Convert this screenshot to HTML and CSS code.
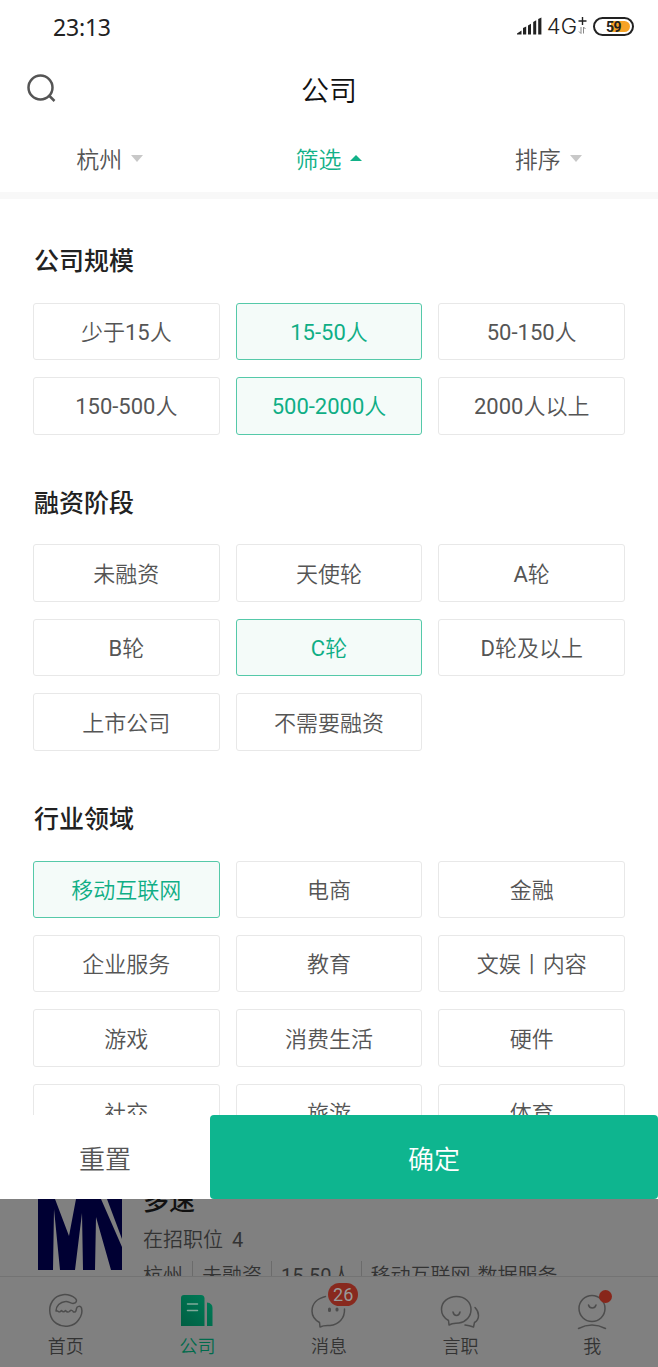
FILE: index.html
```html
<!DOCTYPE html>
<html lang="zh-CN">
<head>
<meta charset="UTF-8" />
<meta name="viewport" content="width=device-width, initial-scale=1" />
<title>公司</title>
<link rel="stylesheet" href="styles.css">
</head>
<body>
  <div class="app">
    <div class="status-bar">
      <span class="time">23:13</span>
      <div class="status-icons">
        <svg class="signal" width="25" height="18" viewBox="0 0 25 18">
          <path d="M0 17.5V16.5L4.5 13.5V17.5ZM6 17.5V11L9.2 9.5V17.5ZM11 17.5V8.5L14 6.8V17.5ZM16.2 17.5V5L19.2 3.3V17.5ZM21.2 17.5V2L24.4 0.5V17.5Z" fill="#222"/>
        </svg>
        <span class="network">4G</span>
        <svg class="data" width="9" height="18" viewBox="0 0 9 18">
          <path d="M4.5 0V8M0.5 4H8.5" stroke="#222" stroke-width="1.4" fill="none"/>
          <path d="M3 10V16.5L1 14.5M5.5 16.5V10L7.5 12" stroke="#888" stroke-width="1" fill="none"/>
        </svg>
        <div class="battery"><span>59</span></div>
      </div>
    </div>

    <header class="header">
      <svg class="search" width="32" height="32" viewBox="0 0 32 32">
        <circle cx="13.5" cy="13.5" r="12"/>
        <path d="M22 21.5L27.5 27" />
      </svg>
      <h1>公司</h1>
    </header>

    <nav class="filters">
      <div class="filter">杭州<i class="arrow"></i></div>
      <div class="filter active">筛选<i class="arrow up"></i></div>
      <div class="filter">排序<i class="arrow"></i></div>
    </nav>

    <main class="panel">
      <section>
        <h2>公司规模</h2>
        <div class="options">
          <button>少于15人</button>
          <button class="selected">15-50人</button>
          <button>50-150人</button>
          <button>150-500人</button>
          <button class="selected">500-2000人</button>
          <button>2000人以上</button>
        </div>
      </section>
      <section>
        <h2>融资阶段</h2>
        <div class="options">
          <button>未融资</button>
          <button>天使轮</button>
          <button>A轮</button>
          <button>B轮</button>
          <button class="selected">C轮</button>
          <button>D轮及以上</button>
          <button>上市公司</button>
          <button>不需要融资</button>
        </div>
      </section>
      <section>
        <h2>行业领域</h2>
        <div class="options">
          <button class="selected">移动互联网</button>
          <button>电商</button>
          <button>金融</button>
          <button>企业服务</button>
          <button>教育</button>
          <button>文娱丨内容</button>
          <button>游戏</button>
          <button>消费生活</button>
          <button>硬件</button>
          <button>社交</button>
          <button>旅游</button>
          <button>体育</button>
        </div>
      </section>
    </main>

    <div class="actions">
      <button class="reset">重置</button>
      <button class="confirm">确定</button>
    </div>

    <div class="company">
      <svg class="logo" width="84" height="71" viewBox="0 0 84 71">
        <path d="M0 0H17L31 37L38 0H63L84 48V71H73L58 18L57 71H45L44 14L37 71H22L16 10L15 71H0ZM69 0H84V40Z"/>
      </svg>
      <div class="company-info">
        <h3>多速</h3>
        <p class="jobs">在招职位 4</p>
        <p class="tags"><span>杭州</span><span>未融资</span><span>15-50人</span><span>移动互联网 数据服务</span></p>
      </div>
    </div>

    <footer class="tabs">
      <div class="tab">
        <svg width="44" height="40" viewBox="0 0 44 40">
          <path d="M31.5 7.5C24 1.5 13.5 2.5 8.5 10C3.5 17.5 5.5 28 12.5 32.5C20 37.5 30 35.5 34.5 29C37.5 25 38.5 20.5 37.5 17C36.5 14.5 33 15 32.5 17.5C32 20.5 31.5 21.5 29.5 21Q27.5 18 25.5 20.5Q23.5 22 21.5 19.5Q19.5 22 17.5 19.5Q15.5 22 13.5 20H12C12 15 16 11 21.5 10.5C24.5 10 26 12.5 29 12.5C32.5 12 33.5 9.5 31.5 7.5Z"/>
        </svg>
        <span>首页</span>
      </div>
      <div class="tab current">
        <svg width="44" height="40" viewBox="0 0 44 40">
          <defs>
            <linearGradient id="green" x1="0" y1="1" x2="1" y2="0">
              <stop offset="0" stop-color="#005f43"/>
              <stop offset="1" stop-color="#007d58"/>
            </linearGradient>
          </defs>
          <path class="building" d="M6 35V7Q6 4 9 4H26Q29 4 29.5 7V35ZM32 35V11.5Q37.5 12 37.5 17V35Z"/>
          <path class="lines" d="M12.5 13H22.5M12.5 19.5H22.5"/>
        </svg>
        <span>公司</span>
      </div>
      <div class="tab">
        <svg width="44" height="40" viewBox="0 0 44 40">
          <path d="M18.5 5.5C10 7.5 5 13 5 20C5 25.5 8 29 12.5 31.5L13 36C17 34 19.5 34.5 23 34.5C31.5 33.5 38 27.5 37.5 18"/>
          <path class="eyes" d="M22.5 18V19.5M30 18V19"/>
        </svg>
        <em class="badge">26</em>
        <span>消息</span>
      </div>
      <div class="tab">
        <svg width="44" height="40" viewBox="0 0 44 40">
          <path d="M17.5 5.5C9 5.5 2.5 11 2.5 18.5C2.5 23.5 5 27 9.5 29.5L10 34C14 31.5 16 32.5 20 32C27 31 32 25.5 32 18.5C32 11 26 5.5 17.5 5.5Z"/>
          <path d="M14 21C15 25.5 20 25.5 21 21M36 16.5C40.5 21 41 28 35.5 31.5L34.5 36C31.5 35 29.5 34.5 26 34"/>
        </svg>
        <span>言职</span>
      </div>
      <div class="tab">
        <svg width="44" height="40" viewBox="0 0 44 40">
          <circle cx="22" cy="17.5" r="13"/>
          <path d="M18.5 14C19.5 18 25 18 26 14M8.5 37.5Q22 30.5 35.5 37.5"/>
        </svg>
        <em class="dot"></em>
        <span>我</span>
      </div>
    </footer>
  </div>
</body>
</html>
```
FILE: styles.css
```css
* {
  box-sizing: border-box;
}
body {
  margin: 0;
  background-color: #fff;
  font-family: Roboto, "Noto Sans CJK SC DemiLight", "Noto Sans CJK SC", sans-serif;
  font-weight: 400;
  color: #555;
}
h1, h2, h3, p {
  margin: 0;
}
button {
  padding: 0;
  border: none;
  background-color: #fff;
  font: inherit;
  color: inherit;
}
.app {
  display: flex;
  flex-direction: column;
  width: 658px;
  height: 1367px;
  overflow: hidden;
}

/* top */
.status-bar {
  display: flex;
  justify-content: space-between;
  align-items: center;
  height: 53px;
  padding: 0 24px 0 53px;
  color: #222;
}
.time {
  font-family: "Noto Sans", sans-serif;
  font-size: 23px;
  letter-spacing: -0.2px;
}
.status-icons {
  display: flex;
  align-items: center;
  margin-top: -1px;
}
.network {
  margin: 0 1px 0 5px;
  font-family: Inter, sans-serif;
  font-size: 22px;
  font-weight: 300;
  line-height: 24px;
}
.battery {
  width: 41px;
  height: 19px;
  margin-left: 6px;
  padding: 2px;
  border: 2px solid #222;
  border-radius: 10px;
}
.battery span {
  display: block;
  height: 11px;
  border-radius: 6px;
  background: linear-gradient(to right, #fff 42%, #f7a326 42%);
  font-size: 14px;
  font-weight: 700;
  line-height: 12px;
  letter-spacing: -0.5px;
  text-align: center;
}
.header {
  display: grid;
  grid-template-columns: 32px 1fr 32px;
  align-items: center;
  height: 72px;
  padding: 2px 27px 0;
}
.search {
  fill: none;
  stroke: #555;
  stroke-width: 2.5;
}
h1 {
  padding-top: 3px;
  font-size: 28px;
  font-weight: 350;
  line-height: 40px;
  text-align: center;
  color: #111;
}
.filters {
  display: grid;
  grid-template-columns: repeat(3, 1fr);
  height: 74px;
  padding-bottom: 1px;
  border-bottom: 7px solid #f8f8f8;
}
.filter {
  display: flex;
  justify-content: center;
  align-items: center;
  gap: 9px;
  font-size: 23px;
  font-weight: 350;
}
.filter.active {
  color: #12b188;
}
.arrow {
  border: 6px solid transparent;
  border-top: 7px solid #c8c8c8;
  border-bottom: none;
}
.arrow.up {
  border-top: none;
  border-bottom: 6px solid #12b188;
}

/* filter panel */
.panel {
  height: 916px;
  padding: 0 33px;
  overflow: hidden;
}
section {
  padding-top: 44px;
}
section + section {
  padding-top: 50px;
}
h2 {
  height: 59.8px;
  padding-left: 1px;
  font-family: Roboto, "Noto Sans CJK SC", sans-serif;
  font-size: 25px;
  font-weight: 500;
  line-height: 38px;
  color: #222;
}
.options {
  display: grid;
  grid-template-columns: repeat(3, 1fr);
  grid-auto-rows: 57.5px;
  gap: 16.9px 16px;
}
.options button {
  padding-bottom: 3px;
  border: 1px solid #e8e8e8;
  border-radius: 3px;
  font-size: 22px;
}
.options .selected {
  border-color: #55c9a9;
  background-color: #f4fbf9;
  color: #0fae85;
}
.actions {
  display: flex;
  flex: none;
  height: 84px;
  font-size: 26px;
  font-weight: 350;
}
.reset {
  width: 210px;
}
.confirm {
  flex: 1;
  border-radius: 4px;
  background-color: #0eb58f;
  color: #fff;
}

/* dimmed page behind the panel */
.company {
  display: flex;
  height: 77px;
  padding-left: 38px;
  background-color: #808080;
  overflow: hidden;
  color: #333;
}
.logo {
  flex: none;
  fill: #000033;
}
.company-info {
  margin: -17px 0 0 21px;
}
h3 {
  font-family: Roboto, "Noto Sans CJK SC", sans-serif;
  font-size: 26px;
  font-weight: 500;
  line-height: 38px;
  color: #111;
}
.jobs {
  margin-top: 5px;
  font-size: 20px;
  line-height: 30px;
  word-spacing: 4px;
}
.tags {
  display: flex;
  margin-top: 6px;
  font-size: 20px;
  line-height: 30px;
  word-spacing: 2px;
  white-space: nowrap;
}
.tags span + span {
  margin-left: 9px;
  padding-left: 9px;
  border-left: 1px solid #6b6b6b;
}
.tabs {
  display: grid;
  grid-template-columns: repeat(5, 1fr);
  flex: 1;
  border-top: 1px solid #737373;
  background-color: #808080;
}
.tab {
  position: relative;
  display: flex;
  flex-direction: column;
  align-items: center;
  padding-top: 14px;
  font-size: 18px;
  font-weight: 350;
  line-height: 26px;
  color: #333;
}
.tab svg {
  flex: none;
  margin-bottom: 3px;
  fill: none;
  stroke: #4d4d4d;
  stroke-width: 1.5;
  stroke-linecap: round;
  stroke-linejoin: round;
}
.tab .eyes {
  stroke-width: 3;
}
.current {
  color: #006b4c;
}
.current .building {
  fill: url(#green);
  stroke: none;
}
.current .lines {
  stroke: #80aa9a;
}
.badge {
  position: absolute;
  top: 6px;
  left: 65px;
  width: 30px;
  height: 23px;
  border-radius: 12px;
  background-color: #88291e;
  font-size: 18px;
  font-style: normal;
  font-weight: 400;
  line-height: 24px;
  text-align: center;
  color: #999;
}
.dot {
  position: absolute;
  top: 13px;
  left: 73px;
  width: 13px;
  height: 13px;
  border-radius: 50%;
  background-color: #88261a;
}
```
